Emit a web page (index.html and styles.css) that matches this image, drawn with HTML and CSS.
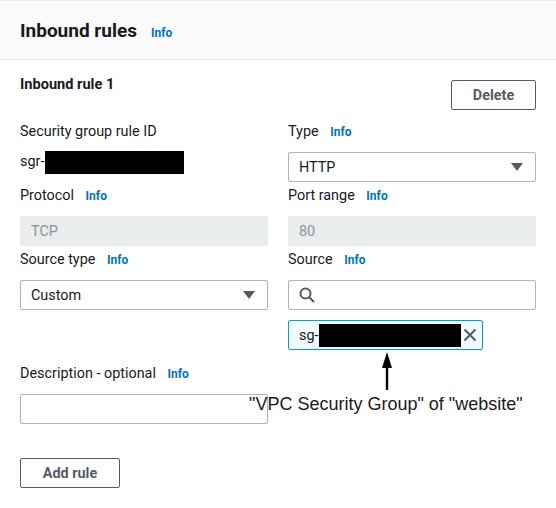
FILE: index.html
```html
<!DOCTYPE html>
<html>
<head>
<meta charset="utf-8">
<link rel="stylesheet" href="styles.css">
</head>
<body>
<div class="panel">
  <div class="panel-header">
    <h2 class="title">Inbound rules</h2>
    <a class="info">Info</a>
  </div>
  <div class="panel-body">
    <div class="rule-head">
      <span class="rule-title">Inbound rule 1</span>
      <button class="btn btn-delete">Delete</button>
    </div>
    <div class="grid">
      <div class="field">
        <div class="label">Security group rule ID</div>
        <div class="value">sgr-<span class="redact redact-sgr"></span></div>
      </div>
      <div class="field">
        <div class="label">Type <a class="info">Info</a></div>
        <div class="select">HTTP<span class="caret"></span></div>
      </div>
      <div class="field">
        <div class="label">Protocol <a class="info">Info</a></div>
        <div class="input disabled">TCP</div>
      </div>
      <div class="field">
        <div class="label">Port range <a class="info">Info</a></div>
        <div class="input disabled">80</div>
      </div>
      <div class="field">
        <div class="label">Source type <a class="info">Info</a></div>
        <div class="select">Custom<span class="caret"></span></div>
      </div>
      <div class="field">
        <div class="label">Source <a class="info">Info</a></div>
        <div class="input search">
          <svg class="search-icon" width="16" height="16" viewBox="0 0 16 16"><circle cx="6.5" cy="6.5" r="5" fill="none" stroke="#545b64" stroke-width="2"/><line x1="10.2" y1="10.2" x2="14.5" y2="14.5" stroke="#545b64" stroke-width="2" stroke-linecap="round"/></svg>
        </div>
        <div class="token">sg-<span class="redact redact-sg"></span>
          <svg class="token-x" width="14" height="14" viewBox="0 0 14 14"><path d="M1.5 1.5 L12.5 12.5 M12.5 1.5 L1.5 12.5" stroke="#545b64" stroke-width="2" fill="none"/></svg>
        </div>
      </div>
      <div class="field">
        <div class="label">Description - optional <a class="info">Info</a></div>
        <div class="input"></div>
      </div>
    </div>
    <button class="btn btn-add">Add rule</button>
  </div>
  <svg class="arrow" width="14" height="40" viewBox="0 0 14 40"><path d="M1 16 L6 0 L11 16 Z" fill="#000"/><line x1="6" y1="12" x2="6" y2="38" stroke="#000" stroke-width="2.4"/></svg>
  <div class="annotation">"VPC Security Group" of "website"</div>
</div>
</body>
</html>
```

FILE: styles.css
```css
* { box-sizing: border-box; }
html, body { margin: 0; padding: 0; background: #fff; }
body {
  font-family: Roboto, "Noto Sans", sans-serif;
  color: #16191f;
  font-size: 14.4px;
  width: 556px;
  height: 508px;
  overflow: hidden;
}
.panel { position: relative; height: 508px; }
.panel-header {
  height: 60px;
  background: #fafafa;
  border-top: 1px solid #eaeded;
  border-bottom: 1px solid #eaeded;
  display: flex;
  align-items: center;
  padding: 0 20px;
  gap: 14px;
}
.title {
  margin: 0;
  font-size: 19px;
  font-weight: 700;
  line-height: 22px;
  padding-top: 2px;
}
.info {
  color: #0073bb;
  font-size: 12px;
  font-weight: 700;
  margin-left: 8px;
  text-decoration: none;
}
.panel-header .info { margin-left: 0; padding-top: 5px; }
.panel-body { padding: 20px 20px 0 20px; }
.rule-head {
  display: flex;
  justify-content: space-between;
  align-items: flex-start;
  height: 42px;
}
.rule-title {
  font-weight: 700;
  font-size: 14.6px;
  line-height: 16px;
  margin-top: -4px;
}
.btn {
  font-family: Roboto, "Noto Sans", sans-serif;
  background: #fff;
  border: 1px solid #545b64;
  border-radius: 2px;
  color: #545b64;
  font-weight: 700;
  font-size: 14.4px;
  height: 30px;
  padding: 0;
}
.btn-delete { width: 85px; }
.btn-add { width: 100px; margin-top: 34px; }
.grid {
  display: grid;
  grid-template-columns: 248px 248px;
  column-gap: 20px;
  row-gap: 4px;
}
.field { display: flex; flex-direction: column; gap: 10px; }
.label { line-height: 20px; height: 20px; }
.value { line-height: 20px; height: 20px; display: flex; align-items: center; }
.redact { display: inline-block; background: #000; }
.redact-sgr { width: 139px; height: 23px; margin-left: 1px; }
.select, .input {
  height: 30px;
  border: 1px solid #aab7b8;
  border-radius: 2px;
  padding: 0 10px;
  display: flex;
  align-items: center;
  position: relative;
}
.caret {
  position: absolute;
  right: 12px;
  top: 10px;
  width: 0; height: 0;
  border-left: 6px solid transparent;
  border-right: 6px solid transparent;
  border-top: 8px solid #545b64;
}
.disabled {
  background: #eaeded;
  border-color: #eaeded;
  color: #879596;
}
.token {
  width: 195px;
  height: 30px;
  border: 1px solid #00a1c9;
  border-radius: 2px;
  background: #f1faff;
  display: flex;
  align-items: center;
  padding-left: 10px;
  margin-bottom: 10px;
}
.redact-sg { width: 142px; height: 23px; }
.token-x { margin-left: 2px; }
.arrow { position: absolute; left: 381px; top: 352px; }
.annotation {
  position: absolute;
  left: 249px;
  top: 393px;
  font-family: "Liberation Sans", Arial, sans-serif;
  font-size: 18px;
  line-height: 22px;
  color: #1a1a1a;
}
```
